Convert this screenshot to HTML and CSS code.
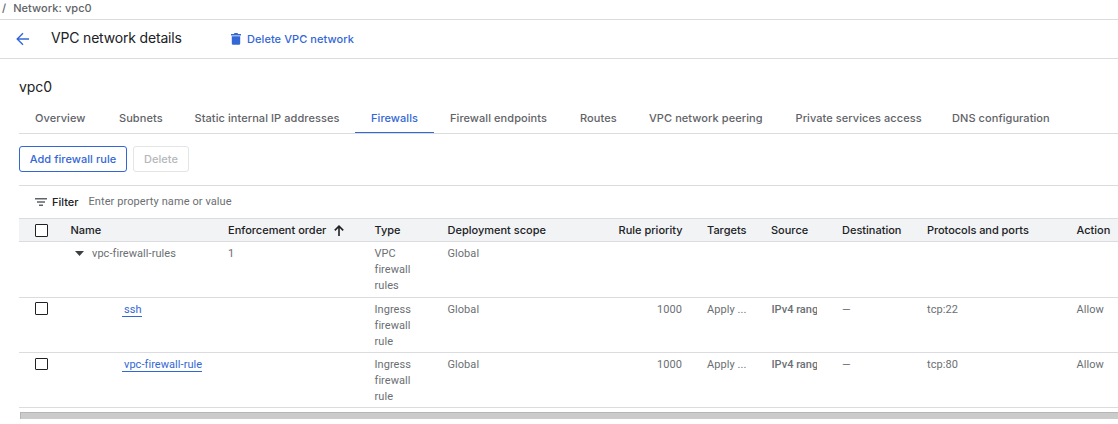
FILE: index.html
```html
<!DOCTYPE html>
<html lang="en">
<head>
<meta charset="utf-8">
<title>VPC network details</title>
<link rel="stylesheet" href="styles.css">
</head>
<body>
<nav class="crumbs"><span class="slash">/</span><span class="crumb">Network: vpc0</span></nav>
<header class="topbar">
  <svg class="back" viewBox="0 0 14 14"><path d="M13 7H1.5M7 1.2 1.2 7 7 12.8" fill="none" stroke="currentColor" stroke-width="1.4"/></svg>
  <h1 class="title">VPC network details</h1>
  <button class="delete-network">
    <svg class="trash" viewBox="0 0 10 12"><path d="M0 1h2.8l.7-1h3l.7 1H10v1.4H0zM.8 3.2h8.4v7.3q0 1.3-1.3 1.3H2.1Q.8 11.8.8 10.5z" fill="currentColor"/></svg>
    <span>Delete VPC network</span>
  </button>
</header>
<main class="content">
  <h2 class="name">vpc0</h2>
  <div class="tabs">
    <a class="tab">Overview</a>
    <a class="tab">Subnets</a>
    <a class="tab">Static internal IP addresses</a>
    <a class="tab active">Firewalls</a>
    <a class="tab">Firewall endpoints</a>
    <a class="tab">Routes</a>
    <a class="tab">VPC network peering</a>
    <a class="tab">Private services access</a>
    <a class="tab">DNS configuration</a>
  </div>
  <div class="actions">
    <button class="btn add">Add firewall rule</button>
    <button class="btn del" disabled>Delete</button>
  </div>
  <div class="filter">
    <svg class="filter-icon" viewBox="0 0 12 8"><path d="M0 .8h12M2 4h8M4 7.2h4" stroke="#5f6368" stroke-width="1.5"/></svg>
    <span class="filter-label">Filter</span>
    <span class="placeholder">Enter property name or value</span>
  </div>
  <div class="table">
    <div class="row head">
      <span class="cell"><i class="box"></i></span>
      <span class="cell">Name</span>
      <span class="cell">Enforcement order<svg class="sort" viewBox="0 0 10 11"><path d="M5 11V1.5M.8 5.4 5 1.2 9.2 5.4" fill="none" stroke="currentColor" stroke-width="1.6"/></svg></span>
      <span class="cell">Type</span>
      <span class="cell">Deployment scope</span>
      <span class="cell num">Rule priority</span>
      <span class="cell">Targets</span>
      <span class="cell">Source</span>
      <span class="cell">Destination</span>
      <span class="cell ports">Protocols and ports</span>
      <span class="cell">Action</span>
    </div>
    <div class="row group">
      <span class="cell"></span>
      <span class="cell policy"><i class="caret"></i>vpc-firewall-rules</span>
      <span class="cell">1</span>
      <span class="cell type">VPC firewall rules</span>
      <span class="cell">Global</span>
      <span class="cell"></span><span class="cell"></span><span class="cell"></span><span class="cell"></span><span class="cell"></span><span class="cell"></span>
    </div>
    <div class="row">
      <span class="cell"><i class="box"></i></span>
      <span class="cell rule"><a class="link">ssh</a></span>
      <span class="cell"></span>
      <span class="cell type">Ingress firewall rule</span>
      <span class="cell">Global</span>
      <span class="cell num">1000</span>
      <span class="cell">Apply ...</span>
      <span class="cell source">IPv4 rang</span>
      <span class="cell dash">—</span>
      <span class="cell">tcp:22</span>
      <span class="cell">Allow</span>
    </div>
    <div class="row">
      <span class="cell"><i class="box"></i></span>
      <span class="cell rule"><a class="link">vpc-firewall-rule</a></span>
      <span class="cell"></span>
      <span class="cell type">Ingress firewall rule</span>
      <span class="cell">Global</span>
      <span class="cell num">1000</span>
      <span class="cell">Apply ...</span>
      <span class="cell source">IPv4 rang</span>
      <span class="cell dash">—</span>
      <span class="cell">tcp:80</span>
      <span class="cell">Allow</span>
    </div>
  </div>
  <div class="scrollbar"></div>
</main>
</body>
</html>
```
FILE: styles.css
```css
* { box-sizing: border-box; }
body { margin: 0; width: 1118px; height: 424px; overflow: hidden; background: #fff; color: #202124; font-family: Inter, sans-serif; font-size: 11px; letter-spacing: .07px; }
h1, h2 { margin: 0; font-weight: 400; }
button { font-family: inherit; letter-spacing: inherit; background: none; border: 0; padding: 0; }
.crumbs { height: 20px; border-bottom: 1px solid #dadce0; display: flex; gap: 7px; padding-left: 2px; line-height: 17px; color: #5f6368; font-weight: 500; }
.topbar { height: 39px; border-bottom: 1px solid #dadce0; display: flex; align-items: center; padding-left: 16px; }
.back { width: 14px; height: 14px; color: #3367d6; }
.title { width: 180px; margin-left: 21px; font-size: 14px; line-height: 20px; padding-bottom: 2px; letter-spacing: -.18px; white-space: nowrap; }
.delete-network { display: flex; align-items: center; gap: 6px; color: #3367d6; font-size: 11px; font-weight: 500; white-space: nowrap; }
.trash { width: 10px; height: 12px; }
.content { padding-left: 19px; }
.name { font-size: 14px; line-height: 20px; padding-top: 18px; height: 44px; letter-spacing: -.05px; }
.tabs { height: 31px; display: grid; grid-template-columns: 84px 75.5px 176.5px 79px 130px 69px 146.5px 156.5px 182px; border-bottom: 1px solid #dadce0; }
.tab { height: 30px; padding-left: 16px; line-height: 30px; color: #5f6368; font-weight: 500; white-space: nowrap; }
.tab.active { color: #3367d6; border-bottom: 1px solid #3367d6; }
.actions { display: flex; gap: 6px; padding-top: 12px; height: 51px; }
.btn { height: 26px; border: 1px solid #3367d6; border-radius: 3px; font-size: 11px; font-weight: 500; color: #3367d6; white-space: nowrap; }
.add { width: 108px; }
.del { width: 56px; color: #b5b7ba; border-color: #e4e5e7; }
.filter { height: 33px; border-top: 1px solid #dadce0; display: flex; align-items: center; padding-left: 16px; }
.filter-icon { width: 12px; height: 8px; }
.filter-label { width: 36.5px; margin-left: 5px; font-weight: 500; letter-spacing: 0; }
.placeholder { font-family: Roboto, sans-serif; color: #6b6f73; padding-bottom: 2px; letter-spacing: .09px; }
.row { display: grid; grid-template-columns: 51.5px 157.5px 146.5px 73px 171px 88.5px 64px 71px 85px 149.5px 67px; height: 55px; border-bottom: 1px solid #dadce0; padding-top: 4px; font-family: Roboto, sans-serif; line-height: 16px; letter-spacing: .06px; color: #6b6f73; }
.row > .cell:first-child { padding-left: 16px; }
.head { height: 24px; border-top: 1px solid #dadce0; padding-top: 3px; background: #f1f3f4; color: #202124; font-family: Inter, sans-serif; font-weight: 500; letter-spacing: 0; white-space: nowrap; }
.group { height: 56px; }
.box { display: block; width: 13px; height: 13px; border: 1px solid #202124; border-radius: 1px; background: #fff; }
.head .box { margin-top: 2px; }
.row:last-child .box { height: 12px; margin-top: 1px; }
.sort { width: 10px; height: 11px; margin-left: 8px; vertical-align: -2px; }
.type { width: 45px; }
.num { text-align: right; padding-right: 25px; }
.ports { letter-spacing: -.05px; }
.policy { display: flex; padding-left: 4.5px; }
.caret { width: 9px; height: 5px; margin: 5px 8px 0 0; background: #3c4043; clip-path: polygon(0 0, 100% 0, 50% 100%); }
.rule { padding-left: 51.5px; }
.link { display: block; width: max-content; height: 15px; padding-left: 2px; color: #3367d6; border-bottom: 1px solid #3367d6; }
.source { width: 45.5px; padding-left: .5px; overflow: hidden; white-space: nowrap; font-weight: 500; letter-spacing: 0; }
.scrollbar { height: 7px; margin: 4px 0 0 1px; background: #cbcbcb; border-top: 1px solid #b4b7b5; border-left: 1px solid #b4b7b5; }
```
